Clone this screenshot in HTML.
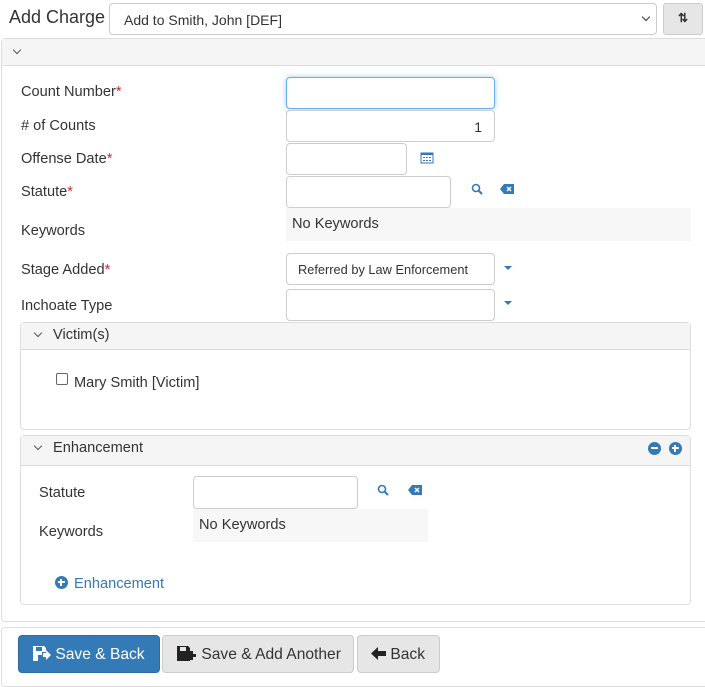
<!DOCTYPE html>
<html><head><style>
*{box-sizing:border-box;margin:0;padding:0}
body{width:705px;height:676px;background:#fff;font-family:"Liberation Sans",Arial,sans-serif;color:#333;position:relative;overflow:hidden;font-size:15px}
.a{position:absolute}
.inp{position:absolute;border:1px solid #ccc;border-radius:4px;background:#fff}
.lbl{position:absolute;left:21px;font-size:14.6px;line-height:18px}
.req{color:#c9302c}
.panel{position:absolute;border:1px solid #ddd;border-radius:4px;background:#fff}
.ph{background:#f5f5f5;border-bottom:1px solid #ddd}
.kw{position:absolute;background:#f7f7f7;font-size:14.6px;padding:7px 6px}
.chev{position:absolute;width:6px;height:6px;border-right:1.3px solid #555;border-bottom:1.3px solid #555;transform:rotate(45deg)}
.btn{position:absolute;top:635px;height:38px;border-radius:4px;font-size:15.6px;line-height:37px;border:1px solid #ccc;background:#e6e6e6;color:#333}
.tri{position:absolute;width:0;height:0;border-left:4px solid transparent;border-right:4px solid transparent;border-top:4px solid #337ab7}
</style></head><body>
<div class="a" style="left:9px;top:7px;font-size:18px">Add Charge</div>
<div class="inp" style="left:109px;top:3px;width:548px;height:32px;font-size:14px;padding:8px 14px">Add to Smith, John [DEF]</div>
<div class="chev" style="left:643px;top:14px;border-color:#333"></div>
<div class="a" style="left:663px;top:3px;width:40px;height:32px;background:#e6e6e6;border:1px solid #ccc;border-radius:3px;font-size:12px;text-align:center;line-height:28px;font-weight:bold;color:#333">⇅</div>

<div class="panel" style="left:1px;top:38px;width:710px;height:584px;border-radius:4px 0 0 4px">
 <div class="ph" style="height:27px"></div>
</div>
<div class="chev" style="left:14px;top:47px"></div>

<div class="lbl" style="top:83px">Count Number<span class="req">*</span></div>
<div class="inp" style="left:286px;top:77px;width:209px;height:32px;border-color:#66afe9;box-shadow:0 0 6px rgba(102,175,233,.6)"></div>
<div class="lbl" style="top:117px"># of Counts</div>
<div class="inp" style="left:286px;top:110px;width:209px;height:32px;text-align:right;padding:8px 12px;font-size:14px">1</div>
<div class="lbl" style="top:150px">Offense Date<span class="req">*</span></div>
<div class="inp" style="left:286px;top:143px;width:121px;height:32px"></div>
<svg class="a" style="left:420px;top:151px" width="14" height="13" viewBox="0 0 14 13"><rect x="1" y="2" width="12" height="10" fill="none" stroke="#337ab7"/><rect x="1" y="2" width="12" height="2" fill="#337ab7"/><g fill="#337ab7"><rect x="3" y="6" width="2" height="1"/><rect x="6" y="6" width="2" height="1"/><rect x="9" y="6" width="2" height="1"/><rect x="3" y="9" width="2" height="1"/><rect x="6" y="9" width="2" height="1"/><rect x="9" y="9" width="2" height="1"/></g></svg>
<div class="lbl" style="top:183px">Statute<span class="req">*</span></div>
<div class="inp" style="left:286px;top:176px;width:165px;height:32px"></div>
<svg class="a" style="left:471px;top:183px" width="12" height="12" viewBox="0 0 12 12"><circle cx="5" cy="5" r="3.5" fill="none" stroke="#337ab7" stroke-width="1.6"/><path d="M7.5 7.5L11 11" stroke="#337ab7" stroke-width="2"/></svg>
<svg class="a" style="left:500px;top:184px" width="14" height="10" viewBox="0 0 14 10"><path d="M4 0H14V10H4L0 5Z" fill="#337ab7"/><path d="M7 3L11 7M11 3L7 7" stroke="#fff" stroke-width="1.5"/></svg>
<div class="lbl" style="top:222px">Keywords</div>
<div class="kw" style="left:286px;top:208px;width:405px;height:33px;padding-top:8px">No Keywords</div>
<div class="lbl" style="top:261px">Stage Added<span class="req">*</span></div>
<div class="inp" style="left:286px;top:253px;width:209px;height:32px;font-size:12.8px;padding:8px 11px">Referred by Law Enforcement</div>
<div class="tri" style="left:504px;top:266px"></div>
<div class="lbl" style="top:297px">Inchoate Type</div>
<div class="inp" style="left:286px;top:289px;width:209px;height:32px"></div>
<div class="tri" style="left:504px;top:301px"></div>

<div class="panel" style="left:20px;top:322px;width:671px;height:108px"><div class="ph" style="height:27px"></div></div>
<div class="chev" style="left:35px;top:330px"></div>
<div class="a" style="left:53px;top:327px;font-size:14.6px">Victim(s)</div>
<div class="a" style="left:56px;top:373px;width:12px;height:12px;border:1px solid #666;border-radius:2px"></div>
<div class="a" style="left:74px;top:375px;font-size:14.6px">Mary Smith [Victim]</div>

<div class="panel" style="left:20px;top:435px;width:671px;height:170px"><div class="ph" style="height:30px"></div></div>
<div class="chev" style="left:35px;top:443px"></div>
<div class="a" style="left:53px;top:440px;font-size:14.6px">Enhancement</div>
<div class="a" style="left:648px;top:442px;width:13px;height:13px;border-radius:50%;background:#337ab7"><div class="a" style="left:3px;top:5px;width:7px;height:2px;background:#fff"></div></div>
<div class="a" style="left:669px;top:442px;width:13px;height:13px;border-radius:50%;background:#337ab7"><div class="a" style="left:3px;top:5px;width:7px;height:2px;background:#fff"></div><div class="a" style="left:5px;top:3px;width:2px;height:7px;background:#fff"></div></div>
<div class="lbl" style="left:39px;top:484px">Statute</div>
<div class="inp" style="left:193px;top:476px;width:165px;height:33px"></div>
<svg class="a" style="left:377px;top:484px" width="12" height="12" viewBox="0 0 12 12"><circle cx="5" cy="5" r="3.5" fill="none" stroke="#337ab7" stroke-width="1.6"/><path d="M7.5 7.5L11 11" stroke="#337ab7" stroke-width="2"/></svg>
<svg class="a" style="left:408px;top:485px" width="14" height="10" viewBox="0 0 14 10"><path d="M4 0H14V10H4L0 5Z" fill="#337ab7"/><path d="M7 3L11 7M11 3L7 7" stroke="#fff" stroke-width="1.5"/></svg>
<div class="lbl" style="left:39px;top:523px">Keywords</div>
<div class="kw" style="left:193px;top:509px;width:235px;height:33px;padding-top:8px">No Keywords</div>
<div class="a" style="left:55px;top:576px;width:13px;height:13px;border-radius:50%;background:#337ab7"><div class="a" style="left:3px;top:5px;width:7px;height:2px;background:#fff"></div><div class="a" style="left:5px;top:3px;width:2px;height:7px;background:#fff"></div></div>
<div class="a" style="left:74px;top:576px;font-size:14.6px;color:#337ab7">Enhancement</div>

<div class="panel" style="left:1px;top:627px;width:710px;height:60px"></div>
<div class="btn" style="left:18px;width:142px;background:#337ab7;border-color:#2e6da4;color:#fff;padding-left:14px">
<svg style="vertical-align:-2px" width="18" height="15" viewBox="0 0 18 15"><path d="M0 0H11L13 2V6H9V9H5V15H0Z" fill="#fff"/><rect x="3" y="1" width="6" height="4" fill="#337ab7"/><path d="M10 7H13V4L18 9L13 14V11H10Z" fill="#fff"/></svg> Save &amp; Back</div>
<div class="btn" style="left:162px;width:192px;padding-left:14px">
<svg style="vertical-align:-2px" width="20" height="15" viewBox="0 0 20 15"><path d="M0 0H11L13 2V15H0Z" fill="#222"/><rect x="3" y="1" width="6" height="4" fill="#e6e6e6"/><path d="M13 5H16V8H19V11H16V14H13V11H10V8H13Z" fill="#222"/></svg> Save &amp; Add Another</div>
<div class="btn" style="left:357px;width:83px;padding-left:13px">
<svg style="vertical-align:-1px" width="15" height="13" viewBox="0 0 15 13"><path d="M0 6.5L7 0V4H15V9H7V13Z" fill="#222"/></svg> Back</div>
</body></html>
